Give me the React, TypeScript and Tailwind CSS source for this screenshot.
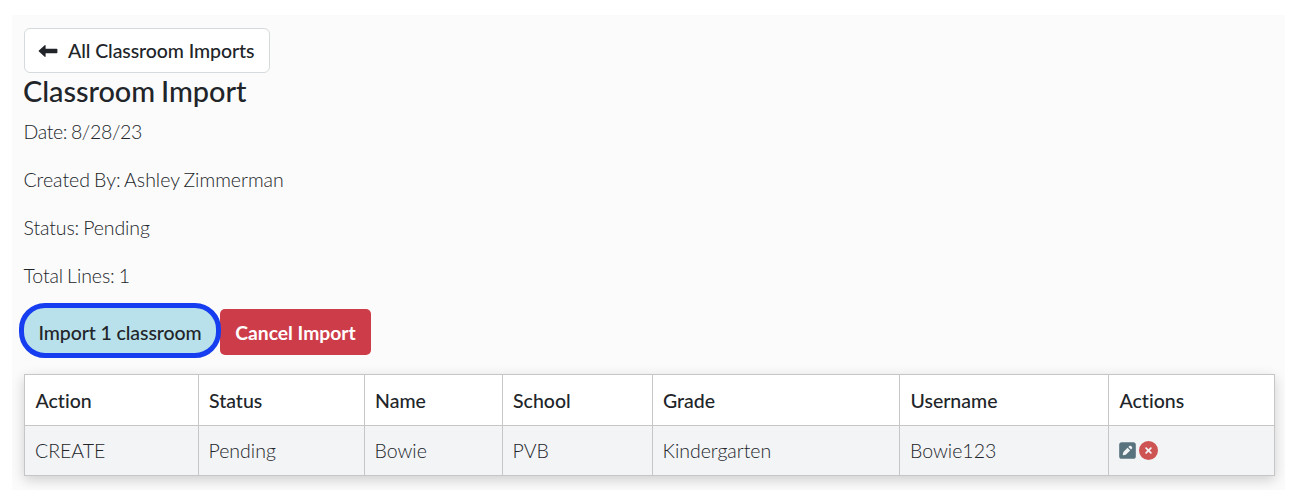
import { FaCircleXmark, FaSquarePen } from 'react-icons/fa6';

const columns = [
  { label: 'Action', width: 'w-[173.5px]' },
  { label: 'Status', width: 'w-[166px]' },
  { label: 'Name', width: 'w-[138px]' },
  { label: 'School', width: 'w-[150px]' },
  { label: 'Grade', width: 'w-[247.5px]' },
  { label: 'Username', width: 'w-[209px]' },
  { label: 'Actions', width: 'w-[166px]' },
];

const rows = [['CREATE', 'Pending', 'Bowie', 'PVB', 'Kindergarten', 'Bowie123']];

const details = [
  { label: 'Date', value: '8/28/23', className: 'tracking-[-0.35px]' },
  { label: 'Created By', value: 'Ashley Zimmerman', className: 'tracking-[0px]' },
  { label: 'Status', value: 'Pending', className: 'tracking-[-0.1px]' },
  { label: 'Total Lines', value: '1', className: 'tracking-[-0.08px]' },
];

function LongArrowLeft() {
  return (
    <svg viewBox="0 0 20 14" className="mr-[10px] h-[14px] w-[20px]" fill="currentColor">
      <path d="M7.6 1.7v3.1h11q.8 0 .8.8v2.8q0 .8-.8.8h-11v3.1q0 1-.9.5L.9 7.6q-.6-.6 0-1.2L6.7 1.2q.9-.5.9.5Z" />
    </svg>
  );
}

export default function App() {
  return (
    <div className="h-[498px] bg-white pt-[15px] pl-3 font-['Lato',sans-serif] text-[19.5px] text-[#212529] [font-variant-ligatures:none] [word-spacing:-1.2px]">
      <main className="flex h-[475px] w-[1273px] flex-col items-start overflow-hidden bg-[#fbfbfb] pt-[13px] pl-3">
        <button className="flex h-[45px] w-[246px] items-center rounded-md border border-[#d5dadd] bg-white pl-[13px] font-medium whitespace-nowrap">
          <LongArrowLeft />
          <span className="pt-px tracking-[-0.08px]">All Classroom Imports</span>
        </button>

        <h1 className="-ml-px text-[28.9px] leading-[36px] font-medium tracking-[-0.05px]">
          Classroom Import
        </h1>

        <div className="mt-[8px] space-y-[19px] font-light">
          {details.map((item) => (
            <p key={item.label} className={`${item.className} -ml-[0.5px] leading-[29px]`}>
              {item.label}: {item.value}
            </p>
          ))}
        </div>

        <div className="mt-[13px] flex h-[55px] items-center">
          <button className="relative -ml-[5px] h-[55px] w-[202px] rounded-[26px] border-[5px] border-[#173df0] bg-[#b8e1eb] pt-[5px] font-medium tracking-[-0.1px] whitespace-nowrap">
            Import 1 classroom
          </button>
          <button className="mt-[3px] -ml-[1px] h-[46px] w-[151px] rounded-[5px] bg-[#cd3c49] pt-[3px] text-[19.3px] font-bold whitespace-nowrap text-white">
            Cancel Import
          </button>
        </div>

        <table className="mt-[16px] w-[1250px] table-fixed border-collapse bg-white text-left shadow-[0_4px_12px_rgba(0,0,0,0.18)]">
          <thead>
            <tr className="h-[51px]">
              {columns.map((col) => (
                <th
                  key={col.label}
                  className={`${col.width} border border-[#c6c6c6] pt-[2px] pl-[10.5px] font-medium`}
                >
                  {col.label}
                </th>
              ))}
            </tr>
          </thead>
          <tbody>
            {rows.map((row) => (
              <tr key={row[5]} className="h-[50px] bg-[#f3f4f6]">
                {row.map((cell) => (
                  <td key={cell} className="border border-[#c6c6c6] pt-px pl-[10px] font-light">
                    {cell}
                  </td>
                ))}
                <td className="border border-[#c6c6c6] pl-[9px]">
                  <div className="flex items-center gap-[2px]">
                    <FaSquarePen className="size-[19px] text-[#59747f]" />
                    <FaCircleXmark className="size-[19px] text-[#ce5353]" />
                  </div>
                </td>
              </tr>
            ))}
          </tbody>
        </table>
      </main>
    </div>
  );
}
